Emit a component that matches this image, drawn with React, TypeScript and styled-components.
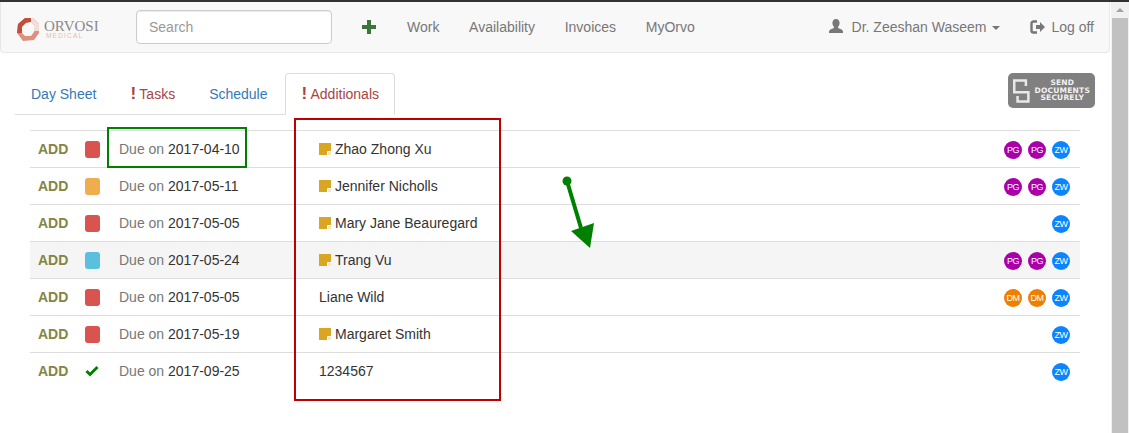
import { createGlobalStyle } from "styled-components";
import styled from "styled-components";

const GlobalStyle = createGlobalStyle`
  html, body {
    margin: 0;
    padding: 0;
    height: 433px;
    overflow: hidden;
    background: #fff;
  }
  body {
    font-family: "Liberation Sans", Arial, sans-serif;
    font-size: 14px;
    line-height: 20px;
    color: #333;
  }
`;

const Window = styled.div`
  position: relative;
  width: 1129px;
  height: 433px;
  display: flex;
  border-top: 2px solid #333;
  box-sizing: border-box;
  overflow: hidden;
`;

const Page = styled.div`
  flex: 1;
  min-width: 0;
`;

const Navbar = styled.nav`
  height: 51px;
  box-sizing: border-box;
  display: flex;
  align-items: center;
  background: #f8f8f8;
  border: 1px solid #e7e7e7;
  border-top: none;
  border-radius: 0 0 4px 4px;
  margin-right: 1px;
  padding: 0 15px 1px 15px;
`;

const Brand = styled.div`
  width: 120px;
  margin-top: 6px;
  display: flex;
  align-items: center;
  gap: 4px;
`;

const BrandText = styled.div`
  display: flex;
  flex-direction: column;
`;

const BrandName = styled.span`
  font-family: "Liberation Serif", serif;
  font-size: 15px;
  line-height: 12px;
  color: #888;
`;

const BrandSub = styled.span`
  font-size: 6.5px;
  line-height: 8px;
  letter-spacing: 1.2px;
  padding-left: 2px;
  color: #eab9ad;
`;

const SearchBox = styled.input`
  width: 196px;
  height: 34px;
  box-sizing: border-box;
  padding: 6px 12px;
  border: 1px solid #ccc;
  border-radius: 4px;
  background: #fff;
  font: 14px "Liberation Sans", Arial, sans-serif;
  box-shadow: inset 0 1px 1px rgba(0, 0, 0, 0.075);
  &::placeholder {
    color: #999;
    opacity: 1;
  }
`;

const PlusLink = styled.span`
  display: flex;
  margin-left: 29px;
  margin-right: 30px;
`;

const NavLink = styled.a`
  color: #777;
  margin-right: 29.7px;
  display: flex;
  align-items: center;
`;

const NavRight = styled.div`
  margin-left: auto;
  display: flex;
  align-items: center;
`;

const UserLink = styled.a`
  color: #777;
  display: flex;
  align-items: center;
  gap: 8px;
  margin-right: 30px;
`;

const LogoffLink = styled.a`
  color: #777;
  display: flex;
  align-items: center;
  gap: 5px;
`;

const Caret = styled.span`
  width: 0;
  height: 0;
  margin-left: -2px;
  margin-top: 2px;
  border-top: 4px solid #777;
  border-left: 4px solid transparent;
  border-right: 4px solid transparent;
`;

const TabRow = styled.div`
  margin: 20px 16px 0 15px;
  display: flex;
  justify-content: space-between;
  align-items: flex-start;
`;

const Tabs = styled.div`
  height: 42px;
  box-sizing: border-box;
  display: flex;
  align-items: flex-start;
  border-bottom: 1px solid #ddd;
`;

const Tab = styled.a<{ $active?: boolean; $alert?: boolean }>`
  height: ${({ $active }) => ($active ? "42px" : "41px")};
  box-sizing: border-box;
  padding: 10px 15px 10px ${({ $active }) => ($active ? "16px" : "15px")};
  margin-left: ${({ $active }) => ($active ? "-1px" : "0")};
  margin-right: 2px;
  color: ${({ $alert }) => ($alert ? "#a94442" : "#337ab7")};
  background: ${({ $active }) => ($active ? "#fff" : "transparent")};
  border: 1px solid ${({ $active }) => ($active ? "#ddd" : "transparent")};
  border-bottom-color: ${({ $active }) => ($active ? "#fff" : "transparent")};
  border-radius: 4px 4px 0 0;

  &:last-child {
    margin-right: 0;
  }
`;

const Bang = styled.b`
  font-size: 17px;
  line-height: 1;
  margin-right: 3.3px;
`;

const SendButton = styled.div`
  width: 87px;
  height: 35px;
  box-sizing: border-box;
  display: flex;
  align-items: center;
  padding: 0 5px;
  gap: 5px;
  border-radius: 5px;
  background: #808080;
`;

const SendText = styled.div`
  flex: 1;
  text-align: center;
  white-space: nowrap;
  font-family: "DejaVu Sans", sans-serif;
  font-size: 7.5px;
  font-weight: 700;
  line-height: 7.5px;
  letter-spacing: 0.2px;
  color: #f2f2f2;
`;

const Table = styled.div`
  margin: 15px 31px 0 30px;
`;

const Row = styled.div<{ $hover?: boolean }>`
  height: 37px;
  box-sizing: border-box;
  display: flex;
  align-items: center;
  border-top: 1px solid #ddd;
  background: ${({ $hover }) => ($hover ? "#f5f5f5" : "#fff")};
`;

const AddCell = styled.b`
  width: 55px;
  padding-left: 8px;
  box-sizing: border-box;
  color: #85853f;
`;

const StatusCell = styled.div`
  width: 34px;
  display: flex;
`;

const Square = styled.span<{ $color: string }>`
  width: 15px;
  height: 17px;
  border-radius: 3px;
  background: ${({ $color }) => $color};
`;

const DueCell = styled.div`
  width: 200px;
  color: #777;
`;

const DueDate = styled.span`
  color: #333;
`;

const NameCell = styled.div`
  flex: 1;
  display: flex;
  align-items: center;
  gap: 4px;
`;

const Initials = styled.div`
  display: flex;
  justify-content: flex-end;
  gap: 6px;
  padding-right: 10px;
  margin-top: 2px;
`;

const Badge = styled.span<{ $color: string }>`
  width: 18px;
  height: 18px;
  border-radius: 50%;
  display: flex;
  align-items: center;
  justify-content: center;
  background: ${({ $color }) => $color};
  color: #fff;
  font-size: 9px;
  letter-spacing: -0.6px;
  line-height: 18px;
`;

const ScrollTrack = styled.div`
  width: 18px;
  flex: none;
  background: #f1f1f1;
  display: flex;
  flex-direction: column;
  align-items: center;
`;

const ScrollArrow = styled.span`
  width: 0;
  height: 0;
  margin-top: 6px;
  margin-bottom: 6px;
  border-bottom: 4px solid #a3a3a3;
  border-left: 4px solid transparent;
  border-right: 4px solid transparent;
`;

const ScrollThumb = styled.div`
  width: 16px;
  flex: 1;
  background: #c1c1c1;
`;

const Mark = styled.div<{ $color: string }>`
  position: absolute;
  box-sizing: border-box;
  pointer-events: none;
  border: 2px solid ${({ $color }) => $color};
`;

const GreenBox = styled(Mark)`
  left: 107px;
  top: 125px;
  width: 140px;
  height: 41px;
`;

const RedBox = styled(Mark)`
  left: 294px;
  top: 116px;
  width: 207px;
  height: 283px;
`;

const ArrowMark = styled.svg`
  position: absolute;
  left: 555px;
  top: 170px;
`;

const Logo = () => (
  <svg width="24" height="26" viewBox="0 0 24 26">
    <polygon points="9,1 17,1 23,7 23,16 18,23 7,24 1,16 2,7" fill="#dc907e" />
    <polygon points="9,1 15,1 15,5 10,6 6,10 6,16 1,16 2,7" fill="#c0503a" />
    <polygon points="15,1 17,1 23,7 23,14 18,14 19,9 15,5" fill="#f5dcd5" />
    <polygon points="10,6 15,5 19,9 18,15 15,19 9,19 6,16 6,10" fill="#f8f8f8" />
  </svg>
);

const Plus = () => (
  <svg width="16" height="16" viewBox="0 0 16 16">
    <path d="M6 1h4v5h5v4h-5v5H6v-5H1V6h5z" fill="#3c763d" />
  </svg>
);

const UserIcon = () => (
  <svg width="16" height="15" viewBox="0 0 16 15">
    <path
      d="M8 0c2.300 0 3.600 1.700 3.600 4 0 1.700-.8 3.200-1.700 4 .1.800.5 1.100 1.300 1.500 1.700.7 3.500 1.300 3.800 3V14H1v-1.500c.3-1.700 2.100-2.300 3.800-3 .8-.4 1.200-.7 1.300-1.500-.9-.8-1.700-2.300-1.700-4C4.400 1.700 5.700 0 8 0z"
      fill="#777"
    />
  </svg>
);

const LogoffIcon = () => (
  <svg width="16" height="14" viewBox="0 0 16 14">
    <path d="M7 1.500H3.500a2 2 0 0 0-2 2v7a2 2 0 0 0 2 2H7" fill="none" stroke="#777" strokeWidth="2.400" />
    <path d="M6 5h4V2l5 5-5 5V9H6z" fill="#777" />
  </svg>
);

const NoteIcon = () => (
  <svg width="12" height="12" viewBox="0 0 12 12">
    <rect width="12" height="12" fill="#daa520" />
    <rect x="9" y="9" width="3" height="3" fill="#f6e7bd" />
    <path d="M8.500 12V8.500H12" fill="none" stroke="#fff" strokeWidth="1" />
  </svg>
);

const CheckIcon = () => (
  <svg width="14" height="12" viewBox="0 0 14 12">
    <path d="M1.500 6L5 9.500 12.500 2" fill="none" stroke="#008000" strokeWidth="3" />
  </svg>
);

const SendLogo = () => (
  <svg width="20" height="28" viewBox="0 0 20 28">
    <path
      d="M15.500 8V1.500H1.500V15.500H18.500V26.500H5.500V20"
      fill="none"
      stroke="#e8e8e8"
      strokeWidth="3"
    />
  </svg>
);

const RED = "#d9534f";
const ORANGE = "#f0ad4e";
const BLUE = "#5bc0de";
const PURPLE = "#aa00aa";
const AMBER = "#ee7f00";
const ZW = "#0a84ff";

type RowData = {
  status: string | null;
  due: string;
  name: string;
  note: boolean;
  badges: [string, string][];
  hover?: boolean;
};

const pg: [string, string] = ["PG", PURPLE];
const dm: [string, string] = ["DM", AMBER];
const zw: [string, string] = ["ZW", ZW];

const rows: RowData[] = [
  { status: RED, due: "2017-04-10", name: "Zhao Zhong Xu", note: true, badges: [pg, pg, zw] },
  { status: ORANGE, due: "2017-05-11", name: "Jennifer Nicholls", note: true, badges: [pg, pg, zw] },
  { status: RED, due: "2017-05-05", name: "Mary Jane Beauregard", note: true, badges: [zw] },
  { status: BLUE, due: "2017-05-24", name: "Trang Vu", note: true, badges: [pg, pg, zw], hover: true },
  { status: RED, due: "2017-05-05", name: "Liane Wild", note: false, badges: [dm, dm, zw] },
  { status: RED, due: "2017-05-19", name: "Margaret Smith", note: true, badges: [zw] },
  { status: null, due: "2017-09-25", name: "1234567", note: false, badges: [zw] },
];

export default function App() {
  return (
    <Window>
      <GlobalStyle />
      <Page>
        <Navbar>
          <Brand>
            <Logo />
            <BrandText>
              <BrandName>ORVOSI</BrandName>
              <BrandSub>MEDICAL</BrandSub>
            </BrandText>
          </Brand>
          <SearchBox placeholder="Search" />
          <PlusLink>
            <Plus />
          </PlusLink>
          <NavLink>Work</NavLink>
          <NavLink>Availability</NavLink>
          <NavLink>Invoices</NavLink>
          <NavLink>MyOrvo</NavLink>
          <NavRight>
            <UserLink>
              <UserIcon />
              Dr. Zeeshan Waseem
              <Caret />
            </UserLink>
            <LogoffLink>
              <LogoffIcon />
              Log off
            </LogoffLink>
          </NavRight>
        </Navbar>
        <TabRow>
          <Tabs>
            <Tab>Day Sheet</Tab>
            <Tab $alert>
              <Bang>!</Bang>Tasks
            </Tab>
            <Tab>Schedule</Tab>
            <Tab $active $alert>
              <Bang>!</Bang>Additionals
            </Tab>
          </Tabs>
          <SendButton>
            <SendLogo />
            <SendText>
              SEND
              <br />
              DOCUMENTS
              <br />
              SECURELY
            </SendText>
          </SendButton>
        </TabRow>
        <Table>
          {rows.map((row, i) => (
            <Row key={i} $hover={row.hover}>
              <AddCell>ADD</AddCell>
              <StatusCell>
                {row.status ? <Square $color={row.status} /> : <CheckIcon />}
              </StatusCell>
              <DueCell>
                Due on <DueDate>{row.due}</DueDate>
              </DueCell>
              <NameCell>
                {row.note && <NoteIcon />}
                {row.name}
              </NameCell>
              <Initials>
                {row.badges.map(([label, color], j) => (
                  <Badge key={j} $color={color}>
                    {label}
                  </Badge>
                ))}
              </Initials>
            </Row>
          ))}
        </Table>
      </Page>
      <ScrollTrack>
        <ScrollArrow />
        <ScrollThumb />
      </ScrollTrack>
      <GreenBox $color="#008000" />
      <RedBox $color="#c00000" />
      <ArrowMark width="44" height="80" viewBox="0 0 44 80">
        <circle cx="12" cy="9" r="4.500" fill="#008000" />
        <path d="M12 9l14 47" stroke="#008000" strokeWidth="4" fill="none" />
        <path d="M16 59L39 51L35 76z" fill="#008000" />
      </ArrowMark>
    </Window>
  );
}
